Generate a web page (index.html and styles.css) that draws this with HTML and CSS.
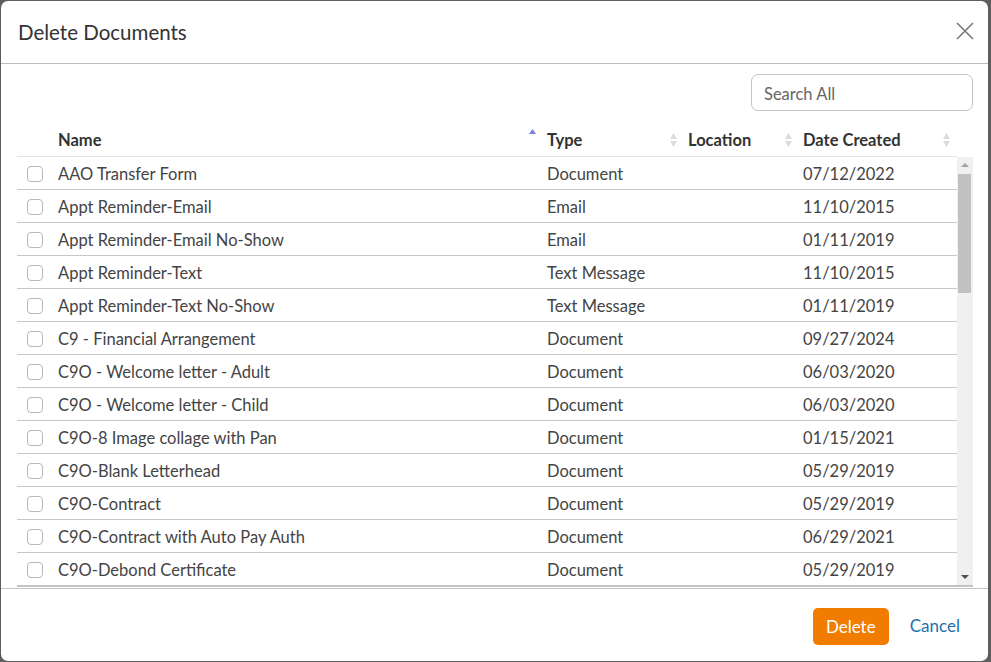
FILE: index.html
```html
<!DOCTYPE html>
<html lang="en">
<head>
    <meta charset="UTF-8">
    <meta name="viewport" content="width=device-width, initial-scale=1.0">
    <title>Delete Documents</title>
    <link rel="stylesheet" href="styles.css">
</head>
<body>
    <div class="modal">
        <div class="modal-header">
            <div class="modal-title">Delete Documents</div>
            <button class="close" aria-label="Close">
                <svg width="18" height="18" viewBox="0 0 18 18"><path d="M1 1 L17 17 M17 1 L1 17" stroke="#777" stroke-width="1.6" fill="none"/></svg>
            </button>
        </div>
        <div class="modal-body">
            <div class="search-row">
                <input class="search" type="text" placeholder="Search All">
            </div>
            <div class="grid-head">
                <span></span>
                <span class="th">Name <svg class="sort asc" width="7" height="14" viewBox="0 0 7 14"><polygon points="0,5 3.5,0 7,5" fill="#7b7fe0"/></svg></span>
                <span class="th">Type <svg class="sort" width="7" height="14" viewBox="0 0 7 14"><polygon points="0,6 3.5,0 7,6" fill="#dcdcdc"/><polygon points="0,8 3.5,14 7,8" fill="#dcdcdc"/></svg></span>
                <span class="th">Location <svg class="sort" width="7" height="14" viewBox="0 0 7 14"><polygon points="0,6 3.5,0 7,6" fill="#dcdcdc"/><polygon points="0,8 3.5,14 7,8" fill="#dcdcdc"/></svg></span>
                <span class="th">Date Created <svg class="sort" width="7" height="14" viewBox="0 0 7 14"><polygon points="0,6 3.5,0 7,6" fill="#dcdcdc"/><polygon points="0,8 3.5,14 7,8" fill="#dcdcdc"/></svg></span>
            </div>
            <div class="grid-wrap">
                <div class="grid-body">
                    <div class="row"><span class="check"></span><span>AAO Transfer Form</span><span>Document</span><span></span><span>07/12/2022</span></div>
                    <div class="row"><span class="check"></span><span>Appt Reminder-Email</span><span>Email</span><span></span><span>11/10/2015</span></div>
                    <div class="row"><span class="check"></span><span>Appt Reminder-Email No-Show</span><span>Email</span><span></span><span>01/11/2019</span></div>
                    <div class="row"><span class="check"></span><span>Appt Reminder-Text</span><span>Text Message</span><span></span><span>11/10/2015</span></div>
                    <div class="row"><span class="check"></span><span>Appt Reminder-Text No-Show</span><span>Text Message</span><span></span><span>01/11/2019</span></div>
                    <div class="row"><span class="check"></span><span>C9 - Financial Arrangement</span><span>Document</span><span></span><span>09/27/2024</span></div>
                    <div class="row"><span class="check"></span><span>C9O - Welcome letter - Adult</span><span>Document</span><span></span><span>06/03/2020</span></div>
                    <div class="row"><span class="check"></span><span>C9O - Welcome letter - Child</span><span>Document</span><span></span><span>06/03/2020</span></div>
                    <div class="row"><span class="check"></span><span>C9O-8 Image collage with Pan</span><span>Document</span><span></span><span>01/15/2021</span></div>
                    <div class="row"><span class="check"></span><span>C9O-Blank Letterhead</span><span>Document</span><span></span><span>05/29/2019</span></div>
                    <div class="row"><span class="check"></span><span>C9O-Contract</span><span>Document</span><span></span><span>05/29/2019</span></div>
                    <div class="row"><span class="check"></span><span>C9O-Contract with Auto Pay Auth</span><span>Document</span><span></span><span>06/29/2021</span></div>
                    <div class="row"><span class="check"></span><span>C9O-Debond Certificate</span><span>Document</span><span></span><span>05/29/2019</span></div>
                </div>
                <div class="scrollbar">
                    <div class="sb-btn"><svg width="16" height="16" viewBox="0 0 16 16"><polygon points="4,10 8,6 12,10" fill="#a3a3a3"/></svg></div>
                    <div class="sb-thumb"></div>
                    <div class="sb-track"></div>
                    <div class="sb-btn"><svg width="16" height="16" viewBox="0 0 16 16"><polygon points="4,6 8,10 12,6" fill="#505050"/></svg></div>
                </div>
            </div>
        </div>
        <div class="modal-footer">
            <button class="btn-delete">Delete</button>
            <a class="cancel" href="#">Cancel</a>
        </div>
    </div>
</body>
</html>
```

FILE: styles.css
```css
body {
    margin: 0;
    padding: 1px 3px 1px 1px;
    background: #5e5e5e;
    font-family: Lato, 'Liberation Sans', sans-serif;
    color: #444;
    height: 662px;
    box-sizing: border-box;
    overflow: hidden;
}
.modal {
    background: #fff;
    border-radius: 7px;
    height: 660px;
    display: flex;
    flex-direction: column;
}
.modal-header {
    height: 62px;
    border-bottom: 1px solid #bdbdbd;
    display: flex;
    align-items: center;
    justify-content: space-between;
    padding: 0 14px 0 17px;
}
.modal-title {
    font-size: 20.5px;
    color: #333;
}
.close {
    border: none;
    background: none;
    padding: 0;
    width: 18px;
    height: 18px;
    margin-bottom: 3px;
}
.modal-body {
    flex: 1;
    padding: 10px 15px 0 16px;
}
.search-row {
    display: flex;
    justify-content: flex-end;
}
.search {
    width: 222px;
    height: 37px;
    box-sizing: border-box;
    border: 1px solid #c4c4c4;
    border-radius: 7px;
    padding: 2px 12px 0;
    font-family: inherit;
    font-size: 16.5px;
    color: #555;
}
.search::placeholder {
    color: #666;
}
.grid-head, .row {
    display: grid;
    grid-template-columns: 41px 489px 141px 115px 154px;
    align-items: center;
}
.grid-head {
    height: 34px;
    margin-top: 11px;
    border-bottom: 1px solid #dfe3ea;
    width: 940px;
}
.th {
    font-weight: bold;
    font-size: 16.5px;
    color: #333;
    display: flex;
    justify-content: space-between;
    align-items: center;
    padding: 2px 11px 0 0;
}
.grid-head .th:last-child {
    padding-right: 7px;
}
.sort.asc {
    margin-top: -8px;
}
.grid-wrap {
    display: flex;
    border-bottom: 2px solid #c4c4c4;
}
.grid-body {
    width: 940px;
    height: 428px;
    overflow: hidden;
}
.scrollbar {
    width: 16px;
    height: 428px;
    background: #f0f0f0;
    display: flex;
    flex-direction: column;
}
.sb-btn {
    height: 16px;
}
.sb-btn svg {
    display: block;
}
.sb-thumb {
    height: 119px;
    margin: 1px 2px 0 1px;
    background: #c1c1c1;
}
.sb-track {
    flex: 1;
}
.row {
    height: 33px;
    box-sizing: border-box;
    padding-top: 2px;
    border-bottom: 1px solid #c8c8c8;
    font-size: 16.5px;
    color: #444;
}
.check {
    width: 16px;
    height: 16px;
    box-sizing: border-box;
    border: 1px solid #b8b8b8;
    border-radius: 4px;
    margin-left: 10px;
}
.modal-footer {
    border-top: 1px solid #c4c4c4;
    margin-top: 1px;
    flex: 0 0 72px;
    display: flex;
    align-items: center;
    justify-content: flex-end;
    padding-right: 28px;
}
.btn-delete {
    background: #f17c00;
    color: #fff;
    border: none;
    border-radius: 5px;
    width: 76px;
    height: 37px;
    font-family: inherit;
    font-size: 17px;
    margin-top: 2px;
}
.cancel {
    color: #2470ae;
    text-decoration: none;
    font-size: 17px;
    margin-left: 21px;
}
```
